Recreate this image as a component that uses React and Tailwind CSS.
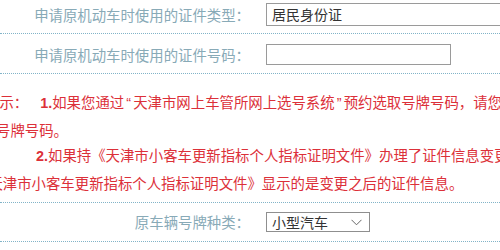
const cjk = { fontFamily: '"Noto Sans CJK SC", "Liberation Sans", sans-serif' }
const num = { fontFamily: '"Liberation Sans", Arial, sans-serif' }

function FormRow({ label, children, className = '' }) {
  return (
    <div className={`flex border-b border-dotted border-[#82b4c8] ${className}`}>
      <div className="w-[250px] shrink-0 text-right text-[14.4px] text-[#88aab7] whitespace-nowrap flex items-center justify-end">
        {label}
      </div>
      <div className="pl-[16px] flex items-center">{children}</div>
    </div>
  )
}

// 半角引号
const Q = ({ children }) => (
  <span className="inline-block w-[9px] text-center" style={num}>{children}</span>
)

export default function App() {
  return (
    <div className="w-[500px] h-[250px] overflow-hidden bg-white" style={cjk}>
      <div className="w-[560px]">
        <FormRow label="申请原机动车时使用的证件类型：" className="h-[34px] pb-[4px]">
          <div className="w-[260px] h-[23px] border border-[#9a9a9a] px-[5px] text-[14px] leading-[21px] text-[#333]">
            居民身份证
          </div>
        </FormRow>

        <FormRow label="申请原机动车时使用的证件号码：" className="h-[40px] pt-[2px]">
          <div className="w-[185px] h-[21px] border border-[#9a9a9a] bg-white" />
        </FormRow>

        {/* 提示 */}
        <div className="h-[129px] pt-[15px] border-b border-dotted border-[#82b4c8] text-[14.4px] leading-[25.5px] text-[#dc3039] overflow-hidden">
          <div className="whitespace-nowrap ml-[-15px]">
            提示：<span className="inline-block w-[12px]" />
            <b style={num}>1.</b>如果您通过<Q>“</Q>天津市网上车管所网上选号系统<Q>”</Q>预约选取号牌号码，请您
            <span className="text-[#6d9cd6]">登录该系统</span>
          </div>
          <div className="whitespace-nowrap ml-[-4px]">号牌号码。</div>
          <div className="whitespace-nowrap ml-[36px]">
            <b style={num}>2.</b>如果持《天津市小客车更新指标个人指标证明文件》办理了证件信息变更
          </div>
          <div className="whitespace-nowrap ml-[-26px]">
            《天津市小客车更新指标个人指标证明文件》显示的是变更之后的证件信息。
          </div>
        </div>

        <FormRow label="原车辆号牌种类：" className="h-[39px]">
          <div className="w-[104px] h-[20px] border border-[#8f8f8f] flex items-center justify-between pl-[5px] pr-[7px] text-[14px] text-[#333]">
            <span className="leading-[18px]">小型汽车</span>
            <svg width="11" height="7" viewBox="0 0 11 7" fill="none">
              <path d="M0.5 0.8 L5.5 5.8 L10.5 0.8" stroke="#666" strokeWidth="1" />
            </svg>
          </div>
        </FormRow>
      </div>
    </div>
  )
}
